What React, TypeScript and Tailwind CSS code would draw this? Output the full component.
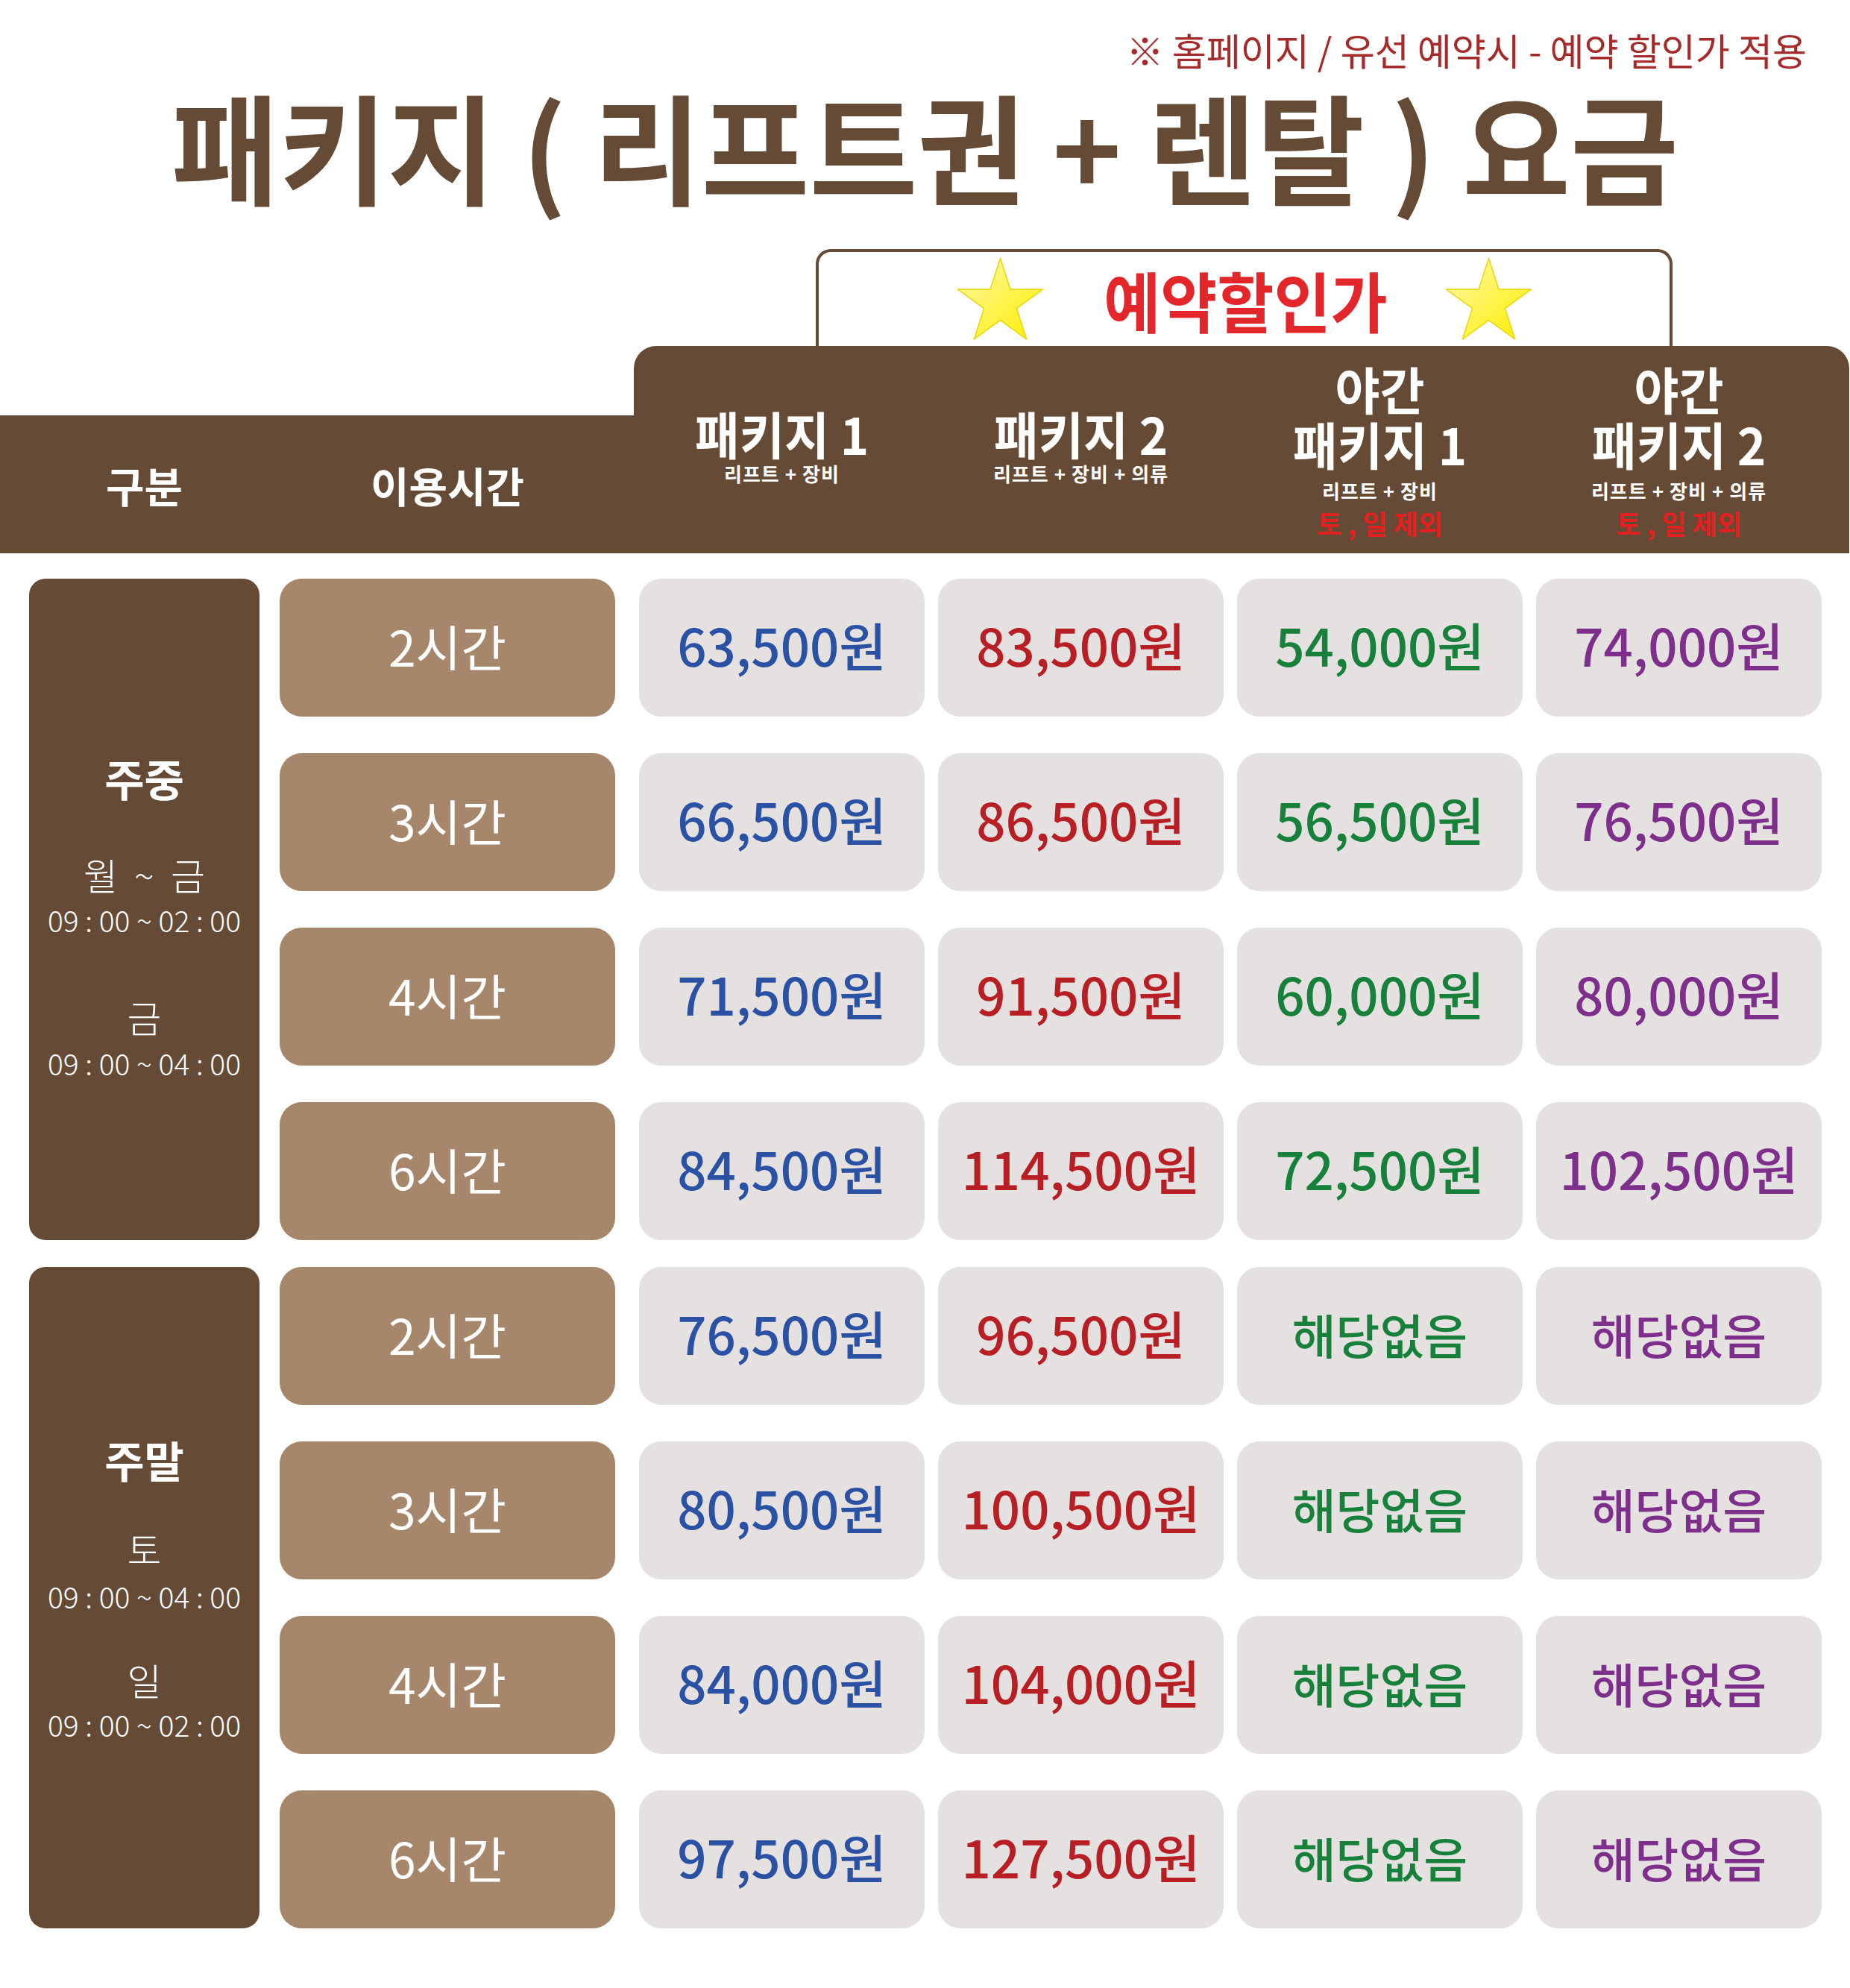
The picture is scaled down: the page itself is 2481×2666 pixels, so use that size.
import React from "react";

function Star({ id }: { id: string }) {
  return (
    <svg width="117" height="112" viewBox="0 0 117 112" className="shrink-0">
      <defs>
        <linearGradient id={id} x1="0" y1="0" x2="1" y2="1">
          <stop offset="0" stopColor="#fff8b0" />
          <stop offset="0.55" stopColor="#fff34a" />
          <stop offset="1" stopColor="#ffee00" />
        </linearGradient>
      </defs>
      <polygon
        points="58.5,1.5 71.97,42.96 115.57,42.96 80.3,68.58 93.77,110.04 58.5,84.42 23.23,110.04 36.7,68.58 1.43,42.96 45.03,42.96"
        fill={`url(#${id})`}
        stroke="#e9d400"
        strokeWidth="1.4"
        strokeLinejoin="round"
      />
    </svg>
  );
}

const colors = ["text-[#2a51a3]", "text-[#b81f25]", "text-[#17803a]", "text-[#7e2f8c]"];

const weekday: { time: string; prices: string[] }[] = [
  { time: "2시간", prices: ["63,500원", "83,500원", "54,000원", "74,000원"] },
  { time: "3시간", prices: ["66,500원", "86,500원", "56,500원", "76,500원"] },
  { time: "4시간", prices: ["71,500원", "91,500원", "60,000원", "80,000원"] },
  { time: "6시간", prices: ["84,500원", "114,500원", "72,500원", "102,500원"] },
];

const weekend: { time: string; prices: string[] }[] = [
  { time: "2시간", prices: ["76,500원", "96,500원", "해당없음", "해당없음"] },
  { time: "3시간", prices: ["80,500원", "100,500원", "해당없음", "해당없음"] },
  { time: "4시간", prices: ["84,000원", "104,000원", "해당없음", "해당없음"] },
  { time: "6시간", prices: ["97,500원", "127,500원", "해당없음", "해당없음"] },
];

function Rows({ rows }: { rows: { time: string; prices: string[] }[] }) {
  return (
    <div className="ml-[27px] flex flex-col gap-[49px]">
      {rows.map((r, i) => (
        <div key={i} className="flex">
          <div className="w-[450px] h-[185px] pb-[8px] rounded-[30px] bg-[#a6876c] flex items-center justify-center text-white text-[66px] leading-none font-normal">
            {r.time}
          </div>
          <div className="ml-[32px] flex gap-[18px]">
            {r.prices.map((p, j) => (
              <div
                key={j}
                className={`w-[383px] h-[185px] pb-[8px] rounded-[30px] bg-[#e4e1e0] flex items-center justify-center leading-none font-medium whitespace-nowrap ${
                  p === "해당없음" ? "text-[64px]" : "text-[69px]"
                } ${colors[j]}`}
              >
                {p}
              </div>
            ))}
          </div>
        </div>
      ))}
    </div>
  );
}

export default function App() {
  return (
    <div className="w-[2481px] min-h-[2666px] bg-white pb-[80px] font-['Noto_Sans_CJK_KR','Noto_Sans',sans-serif]">
      <div className="pt-[36px] pr-[58px] text-right text-[50px] leading-[60px] text-[#a62a2a] whitespace-nowrap">
        ※ 홈페이지 / 유선 예약시 - 예약 할인가 적용
      </div>
      <div className="mt-[12px] flex justify-center h-[170px] items-center">
        <span className="inline-block scale-x-[0.985] text-[160px] leading-[170px] font-bold text-[#654b36] whitespace-nowrap">
          패키지 ( 리프트권 + 렌탈 ) 요금
        </span>
      </div>

      {/* Header */}
      <div className="mt-[56px] flex items-end">
        <div className="w-[850px] h-[185px] bg-[#654b36] flex items-center pl-[39px] text-white font-bold">
          <div className="w-[309px] flex justify-center">
            <span className="inline-block text-[56px] leading-[60px]">구분</span>
          </div>
          <div className="ml-[27px] w-[450px] flex justify-center">
            <span className="inline-block text-[56px] leading-[60px]">이용시간</span>
          </div>
        </div>
        <div className="flex-1 mr-[1px] flex flex-col">
          <div className="ml-[244px] w-[1149px] h-[130px] border-[4px] border-b-0 border-[#654b36] rounded-t-[20px] flex items-center justify-center">
            <Star id="starA" />
            <div className="ml-[82px] w-[377px] flex justify-center">
              <span className="inline-block scale-x-[0.94] text-[88px] leading-none font-bold text-[#e2262a] whitespace-nowrap">
                예약할인가
              </span>
            </div>
            <div className="ml-[79px] flex">
              <Star id="starB" />
            </div>
          </div>
          <div className="h-[278px] bg-[#654b36] rounded-t-[30px] flex pl-[7px] gap-[18px] text-white font-bold">
            <div className="w-[383px] pt-[84px] flex flex-col items-center">
              <span className="inline-block scale-x-[0.96] text-[68px] leading-[66px] whitespace-nowrap">패키지 1</span>
              <span className="mt-[6px] text-[26px] leading-[30px] tracking-[0.04em] whitespace-nowrap">리프트 + 장비</span>
            </div>
            <div className="w-[383px] pt-[84px] flex flex-col items-center">
              <span className="inline-block scale-x-[0.96] text-[68px] leading-[66px] whitespace-nowrap">패키지 2</span>
              <span className="mt-[6px] text-[26px] leading-[30px] tracking-[0.04em] whitespace-nowrap">리프트 + 장비 + 의류</span>
            </div>
            <div className="w-[383px] pt-[22px] flex flex-col items-center">
              <span className="inline-block scale-x-[0.96] text-[68px] leading-[70px] whitespace-nowrap">야간</span>
              <span className="mt-[4px] inline-block scale-x-[0.96] text-[68px] leading-[70px] whitespace-nowrap">패키지 1</span>
              <span className="mt-[13px] text-[26px] leading-[30px] tracking-[0.04em] whitespace-nowrap">리프트 + 장비</span>
              <span className="mt-[9px] text-[36px] leading-[38px] text-[#e3201f] whitespace-nowrap">토 , 일 제외</span>
            </div>
            <div className="w-[383px] pt-[22px] flex flex-col items-center">
              <span className="inline-block scale-x-[0.96] text-[68px] leading-[70px] whitespace-nowrap">야간</span>
              <span className="mt-[4px] inline-block scale-x-[0.96] text-[68px] leading-[70px] whitespace-nowrap">패키지 2</span>
              <span className="mt-[13px] text-[26px] leading-[30px] tracking-[0.04em] whitespace-nowrap">리프트 + 장비 + 의류</span>
              <span className="mt-[9px] text-[36px] leading-[38px] text-[#e3201f] whitespace-nowrap">토 , 일 제외</span>
            </div>
          </div>
        </div>
      </div>

      {/* Body */}
      <div className="mt-[34px] pl-[39px] flex flex-col gap-[36px]">
        <div className="flex">
          <div className="w-[309px] rounded-[22px] bg-[#654b36] flex flex-col items-center text-white pt-[237px]">
            <span className="text-[58px] leading-[60px] font-bold">주중</span>
            <span className="mt-[70px] text-[50px] leading-[58px] font-light whitespace-nowrap">월&nbsp;&nbsp;~&nbsp;&nbsp;금</span>
            <span className="mt-[9px] text-[39px] leading-[46px] font-light whitespace-nowrap">09 : 00 ~ 02 : 00</span>
            <span className="mt-[78px] text-[50px] leading-[58px] font-light">금</span>
            <span className="mt-[10px] text-[39px] leading-[46px] font-light whitespace-nowrap">09 : 00 ~ 04 : 00</span>
          </div>
          <Rows rows={weekday} />
        </div>
        <div className="flex">
          <div className="w-[309px] rounded-[22px] bg-[#654b36] flex flex-col items-center text-white pt-[228px]">
            <span className="text-[58px] leading-[60px] font-bold">주말</span>
            <span className="mt-[60px] text-[50px] leading-[58px] font-light">토</span>
            <span className="mt-[12px] text-[39px] leading-[46px] font-light whitespace-nowrap">09 : 00 ~ 04 : 00</span>
            <span className="mt-[60px] text-[50px] leading-[58px] font-light">일</span>
            <span className="mt-[8px] text-[39px] leading-[46px] font-light whitespace-nowrap">09 : 00 ~ 02 : 00</span>
          </div>
          <Rows rows={weekend} />
        </div>
      </div>
    </div>
  );
}
